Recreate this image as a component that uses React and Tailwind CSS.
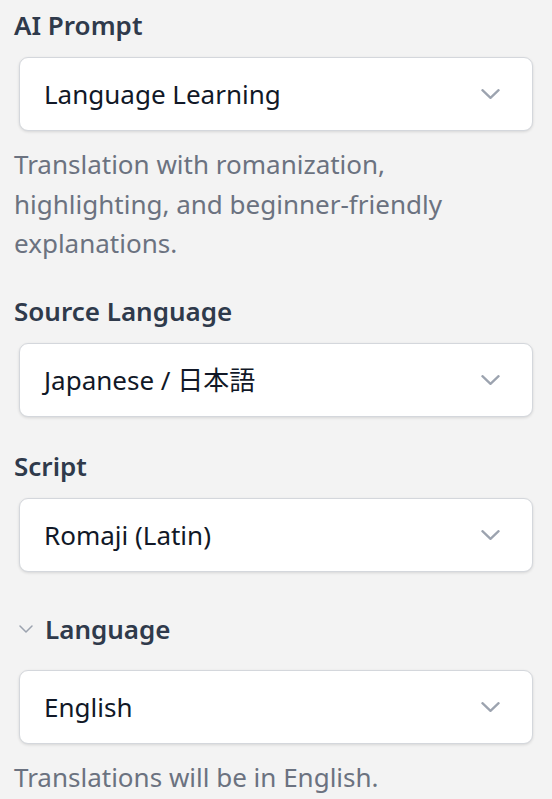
import { useState } from 'react'

function Chevron({ className }) {
  return (
    <svg className={className} viewBox="0 0 20 10" fill="none">
      <polyline points="1.5,1 10,9 18.5,1" stroke="#9ca3af" strokeWidth="2.4" strokeLinecap="round" strokeLinejoin="round" />
    </svg>
  )
}

function Select({ value }) {
  return (
    <div className="mx-[5px] h-[74px] flex items-center justify-between pl-[24px] pr-[32px] bg-white border border-[#d4d7dc] rounded-[9px] shadow-[0_1px_3px_rgba(0,0,0,0.12)]">
      <span className="text-[26px] text-[#111827] leading-none">{value}</span>
      <Chevron className="w-[19px] h-[10px]" />
    </div>
  )
}

function Label({ children }) {
  return <div className="text-[26px] font-semibold leading-[36px] text-[#2f3a4b]">{children}</div>
}

export default function App() {
  const [open] = useState(true)

  return (
    <div className="min-h-screen bg-[#f3f3f3] px-[14px] pt-[7px] font-['Noto_Sans','Noto_Sans_CJK_JP',sans-serif]">
      {/* AI Prompt */}
      <Label>AI Prompt</Label>
      <div className="mt-[14px]">
        <Select value="Language Learning" />
      </div>
      <p className="mt-[14px] text-[26px] leading-[39.5px] text-[#6b7280] pr-[60px]">
        Translation with romanization, highlighting, and beginner-friendly explanations.
      </p>

      {/* Source Language */}
      <div className="mt-[29px]">
        <Label>Source Language</Label>
      </div>
      <div className="mt-[14px]">
        <Select value="Japanese / 日本語" />
      </div>

      {/* Script */}
      <div className="mt-[31px]">
        <Label>Script</Label>
      </div>
      <div className="mt-[14px]">
        <Select value="Romaji (Latin)" />
      </div>

      {/* Language (collapsible) */}
      <div className="mt-[39px] flex items-center">
        <svg className="w-[14px] h-[8px] ml-[5px] mr-[12px]" viewBox="0 0 14 8" fill="none">
          <polyline points="1,1 7,7 13,1" stroke="#9ca3af" strokeWidth="1.5" strokeLinecap="round" strokeLinejoin="round" />
        </svg>
        <Label>Language</Label>
      </div>
      {open && (
        <>
          <div className="mt-[23px]">
            <Select value="English" />
          </div>
          <p className="mt-[14px] text-[26px] leading-[39px] text-[#6b7280]">
            Translations will be in English.
          </p>
        </>
      )}
    </div>
  )
}
